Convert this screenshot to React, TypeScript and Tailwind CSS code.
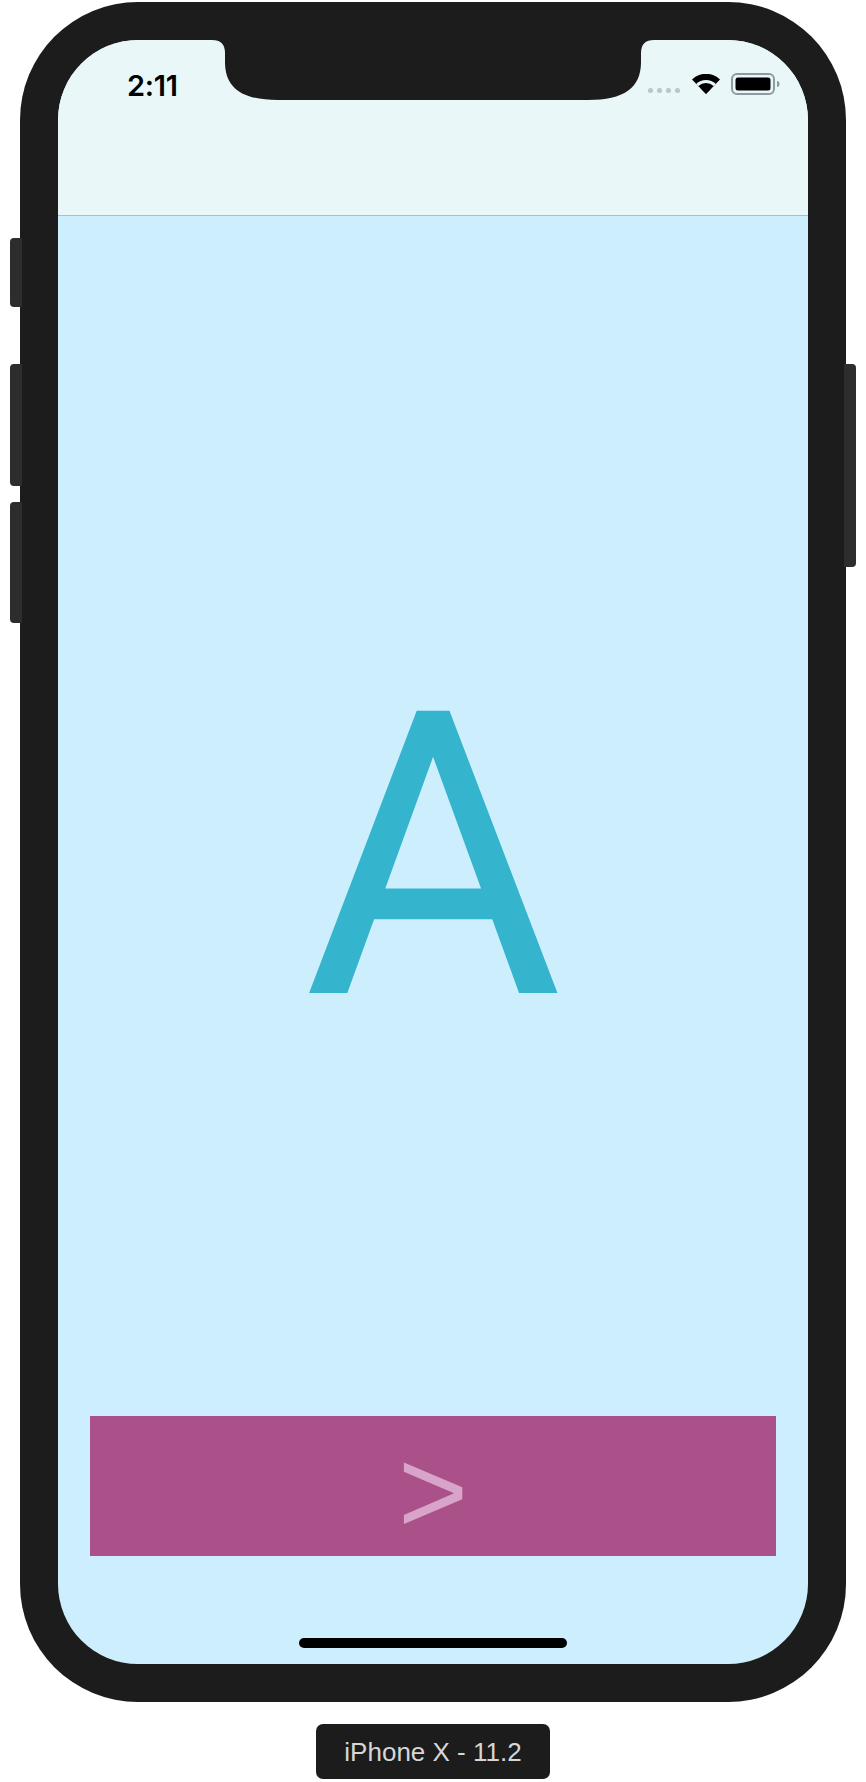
import React from 'react';

function WifiIcon() {
  return (
    <svg width="30" height="20" viewBox="0 0 30 20">
      <path d="M15 20 L1 5.5 A20 20 0 0 1 29 5.5 Z" fill="#000" />
      <path d="M15 20 L5.2 9.9 A14 14 0 0 1 24.8 9.9 Z" fill="#e9f7f8" />
      <path d="M15 20 L7.4 12.1 A11 11 0 0 1 22.6 12.1 Z" fill="#000" />
      <path d="M15 20 L11.4 16.3 A5 5 0 0 1 18.6 16.3 Z" fill="#e9f7f8" />
      <path d="M15 20 L10.6 15.5 A6.2 6.2 0 0 1 19.4 15.5 Z" fill="#000" />
    </svg>
  );
}

function BatteryIcon() {
  return (
    <svg width="50" height="22" viewBox="0 0 50 22">
      <rect x="1" y="1" width="42" height="20" rx="5" fill="none" stroke="#8d9a9f" strokeWidth="2" />
      <rect x="4.5" y="4.5" width="35" height="13" rx="2.5" fill="#000" />
      <path d="M46 8 Q48.5 8 48.5 11 Q48.5 14 46 14 Z" fill="#8d9a9f" />
    </svg>
  );
}

function Notch() {
  return (
    <svg className="absolute top-0 left-[150px]" width="450" height="60" viewBox="0 0 450 60">
      <path
        d="M4 0 Q17 0 17 13 V22 C17 48 34 60 70 60 H380 C416 60 433 48 433 22 V13 Q433 0 446 0 Z"
        fill="#1c1c1c"
      />
    </svg>
  );
}

export default function App() {
  return (
    <div className="w-[866px] h-[1782px] bg-white flex flex-col items-center" style={{ fontFamily: '"Liberation Sans", Arial, sans-serif' }}>
      <div className="relative mt-[2px] w-[826px] h-[1700px] rounded-[118px] bg-[#1c1c1c] p-[38px]">
        {/* side buttons */}
        <div className="absolute left-[-10px] top-[236px] w-[12px] h-[69px] rounded-l-[4px] bg-[#2d2d2d]" />
        <div className="absolute left-[-10px] top-[362px] w-[12px] h-[122px] rounded-l-[4px] bg-[#2d2d2d]" />
        <div className="absolute left-[-10px] top-[500px] w-[12px] h-[121px] rounded-l-[4px] bg-[#2d2d2d]" />
        <div className="absolute right-[-10px] top-[362px] w-[12px] h-[203px] rounded-r-[4px] bg-[#2d2d2d]" />

        <div className="relative w-[750px] h-[1624px] rounded-[80px] overflow-hidden bg-[#cdeefc] flex flex-col">
          <div className="h-[176px] shrink-0 bg-[#e9f7f8] border-b border-[#a8bfc9]">
            <div className="h-[88px] flex items-center justify-between pl-[69px] pr-[27px]">
              <span
                className="text-[29px] font-semibold text-black tracking-[-0.3px] leading-none mt-[3px]"
                style={{ fontFamily: 'Inter, "Liberation Sans", sans-serif' }}
              >
                2:11
              </span>
              <div className="flex items-center">
                <div className="flex gap-[4px] mt-[12px]">
                  <span className="w-[5px] h-[5px] rounded-full bg-[#b9c6ca]" />
                  <span className="w-[5px] h-[5px] rounded-full bg-[#b9c6ca]" />
                  <span className="w-[5px] h-[5px] rounded-full bg-[#b9c6ca]" />
                  <span className="w-[5px] h-[5px] rounded-full bg-[#b9c6ca]" />
                </div>
                <div className="ml-[11px]">
                  <WifiIcon />
                </div>
                <div className="ml-[10px]">
                  <BatteryIcon />
                </div>
              </div>
            </div>
          </div>

          <div className="flex-1 flex flex-col items-center">
            <div
              className="mt-[443px] text-[397px] leading-none text-[#35b4ce]"
              style={{ fontFamily: 'Roboto, "Liberation Sans", sans-serif' }}
            >
              A
            </div>
            <div className="mt-auto mb-[108px] w-[686px] h-[140px] bg-[#ab5189] flex items-center justify-center">
              <span className="text-[120px] leading-none text-[#d9a4c9] mt-[10px]">&gt;</span>
            </div>
          </div>

          <Notch />
          <div className="absolute bottom-[16px] left-[241px] w-[268px] h-[10px] rounded-full bg-black" />
        </div>
      </div>

      <div className="mt-[22px] w-[234px] h-[55px] rounded-[7px] bg-[#1c1c1c] flex items-center justify-center">
        <span className="text-[26px] text-[#d6d6d6] leading-none">iPhone X - 11.2</span>
      </div>
    </div>
  );
}
